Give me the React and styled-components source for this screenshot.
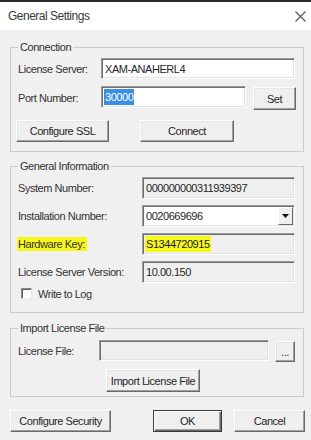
import React from "react";
import styled, { createGlobalStyle, css } from "styled-components";

const Global = createGlobalStyle`
  html, body { margin: 0; padding: 0; background: #f0f0f0; }
  body {
    font-family: "Liberation Sans", Arial, sans-serif;
    font-size: 11px;
    letter-spacing: -0.45px;
    color: #2b2b2b;
  }
  * { box-sizing: border-box; }
`;

const Window = styled.div`
  width: 311px;
  height: 440px;
  background: #f0f0f0;
  border-top: 2px solid #2b2b2b;
  display: flex;
  flex-direction: column;
  overflow: hidden;
`;

const TitleBar = styled.div`
  height: 28px;
  flex: none;
  background: #fff;
  display: flex;
  align-items: center;
  justify-content: space-between;
  padding: 0 5px 0 8px;
`;

const Title = styled.span`
  font-size: 12px;
  letter-spacing: -0.5px;
  color: #3a3a3a;
`;

const Body = styled.div`
  display: flex;
  flex-direction: column;
  padding: 11px 7px 0 10px;
`;

const Group = styled.fieldset`
  margin: 0 0 ${(p) => p.$gap || 0}px 0;
  padding: 0 8px ${(p) => p.$pb}px 7px;
  border: 1px solid #cbcbcb;
  min-width: 0;
`;

const Legend = styled.legend`
  padding: 0 2px;
  line-height: 12px;
  color: #333;
`;

const Rows = styled.div`
  display: flex;
  flex-direction: column;
  gap: ${(p) => p.$gap}px;
  margin-top: ${(p) => p.$mt}px;
`;

const Row = styled.div`
  display: grid;
  grid-template-columns: ${(p) => p.$label}px 1fr;
  align-items: center;
`;

const Label = styled.span`
  white-space: nowrap;
  color: #333;
  ${(p) =>
    p.$highlight &&
    css`
      background: #f6f71c;
      justify-self: start;
      padding: 1px 2px 1px 1px;
      margin-left: -1px;
    `}
`;

const Field = styled.div`
  height: ${(p) => p.$h || 22}px;
  background: ${(p) => (p.$readOnly ? "#efefef" : "#fff")};
  border: 1px solid;
  border-color: #9a9a9a #ffffff #ffffff #9a9a9a;
  box-shadow: inset 1px 1px #6e6e6e, inset -1px -1px #e3e3e3;
  display: flex;
  align-items: center;
  padding: 0 2px 0 3px;
  position: relative;
  min-width: 0;
  white-space: nowrap;
  color: #262626;
`;

const Selected = styled.span`
  background: ${(p) => (p.$yellow ? "#f6f71c" : "#3a8ee6")};
  color: ${(p) => (p.$yellow ? "#222" : "#fff")};
  padding: 2px 1px;
  margin-left: -1px;
`;

const Button = styled.button`
  font: inherit;
  letter-spacing: inherit;
  color: #262626;
  height: ${(p) => p.$h || 22}px;
  width: ${(p) => p.$w}px;
  margin: ${(p) => p.$m || "0"};
  flex: none;
  padding: 0;
  background: #efefef;
  border: 1px solid;
  border-color: #ffffff #6a6a6a #6a6a6a #ffffff;
  box-shadow: inset -1px -1px #a0a0a0, inset 1px 1px #e6e6e6;
  ${(p) =>
    p.$default &&
    css`
      border-color: #3a3a3a;
      box-shadow: inset 1px 1px #fff, inset -1px -1px #6a6a6a, inset -2px -2px #a0a0a0;
    `}
`;

const InlineRow = styled.div`
  display: flex;
  align-items: ${(p) => p.$align || "center"};
  gap: ${(p) => p.$gap || 0}px;
`;

const Grow = styled.div`
  flex: 1;
  min-width: 0;
`;

const DropButton = styled.div`
  position: absolute;
  right: 1px;
  top: 1px;
  bottom: 1px;
  width: 15px;
  background: #efefef;
  border: 1px solid;
  border-color: #ffffff #6a6a6a #6a6a6a #ffffff;
  display: flex;
  align-items: center;
  justify-content: center;
`;

const CheckRow = styled.label`
  display: flex;
  align-items: center;
  gap: 6px;
  margin: -2px 0 0 3px;
  height: 13px;
  color: #333;
`;

const Box = styled.span`
  width: 11px;
  height: 11px;
  background: #fff;
  border: 1px solid;
  border-color: #8a8a8a #e8e8e8 #e8e8e8 #8a8a8a;
  box-shadow: inset 1px 1px #5f5f5f;
`;

const Footer = styled.div`
  display: flex;
  align-items: center;
  margin-top: 13px;
`;

const Spacer = styled.div`
  flex: 1;
`;

function CloseIcon() {
  return (
    <svg width="11" height="11" viewBox="0 0 11 11">
      <path d="M0.5 0.5 L10.5 10.5 M10.5 0.5 L0.5 10.5" stroke="#555" strokeWidth="1.1" fill="none" />
    </svg>
  );
}

function Caret() {
  return (
    <svg width="7" height="4" viewBox="0 0 7 4">
      <path d="M0 0 H7 L3.5 4 Z" fill="#111" />
    </svg>
  );
}

export default function App() {
  return (
    <>
      <Global />
      <Window>
        <TitleBar>
          <Title>General Settings</Title>
          <CloseIcon />
        </TitleBar>
        <Body>
          <Group $pb={9} $gap={8}>
            <Legend>Connection</Legend>
            <Rows $gap={7} $mt={5}>
              <Row $label={83}>
                <Label>License Server:</Label>
                <Field $h={21}>XAM-ANAHERL4</Field>
              </Row>
              <Row $label={83}>
                <Label>Port Number:</Label>
                <InlineRow $gap={7} $align="flex-start">
                  <Grow>
                    <Field>
                      <Selected>30000</Selected>
                    </Field>
                  </Grow>
                  <Button $w={43} $h={23} $m="1px -1px 0 0">Set</Button>
                </InlineRow>
              </Row>
              <InlineRow $gap={31}>
                <Button $w={93} $m="3px 0 0 -2px">Configure SSL</Button>
                <Button $w={94} $m="3px 0 0 0">Connect</Button>
              </InlineRow>
            </Rows>
          </Group>

          <Group $pb={12} $gap={9}>
            <Legend>General Information</Legend>
            <Rows $gap={6} $mt={5}>
              <Row $label={124}>
                <Label>System Number:</Label>
                <Field $readOnly>000000000311939397</Field>
              </Row>
              <Row $label={124}>
                <Label>Installation Number:</Label>
                <Field>
                  0020669696
                  <DropButton>
                    <Caret />
                  </DropButton>
                </Field>
              </Row>
              <Row $label={124}>
                <Label $highlight>Hardware Key:</Label>
                <Field $readOnly>
                  <Selected $yellow>S1344720915</Selected>
                </Field>
              </Row>
              <Row $label={124}>
                <Label>License Server Version:</Label>
                <Field $readOnly>10.00.150</Field>
              </Row>
              <CheckRow>
                <Box />
                Write to Log
              </CheckRow>
            </Rows>
          </Group>

          <Group $pb={4}>
            <Legend>Import License File</Legend>
            <Rows $gap={7} $mt={6}>
              <Row $label={81}>
                <Label>License File:</Label>
                <InlineRow $gap={6} $align="flex-start">
                  <Grow>
                    <Field $h={21} $readOnly />
                  </Grow>
                  <Button $w={20} $h={21} $m="1px 0 0 0">...</Button>
                </InlineRow>
              </Row>
              <InlineRow>
                <Button $w={94} $h={23} $m="0 0 0 88px">Import License File</Button>
              </InlineRow>
            </Rows>
          </Group>

          <Footer>
            <Button $w={101}>Configure Security</Button>
            <Spacer />
            <Button $w={69} $default>OK</Button>
            <Button $w={71} $m="0 -1px 0 12px">Cancel</Button>
          </Footer>
        </Body>
      </Window>
    </>
  );
}
